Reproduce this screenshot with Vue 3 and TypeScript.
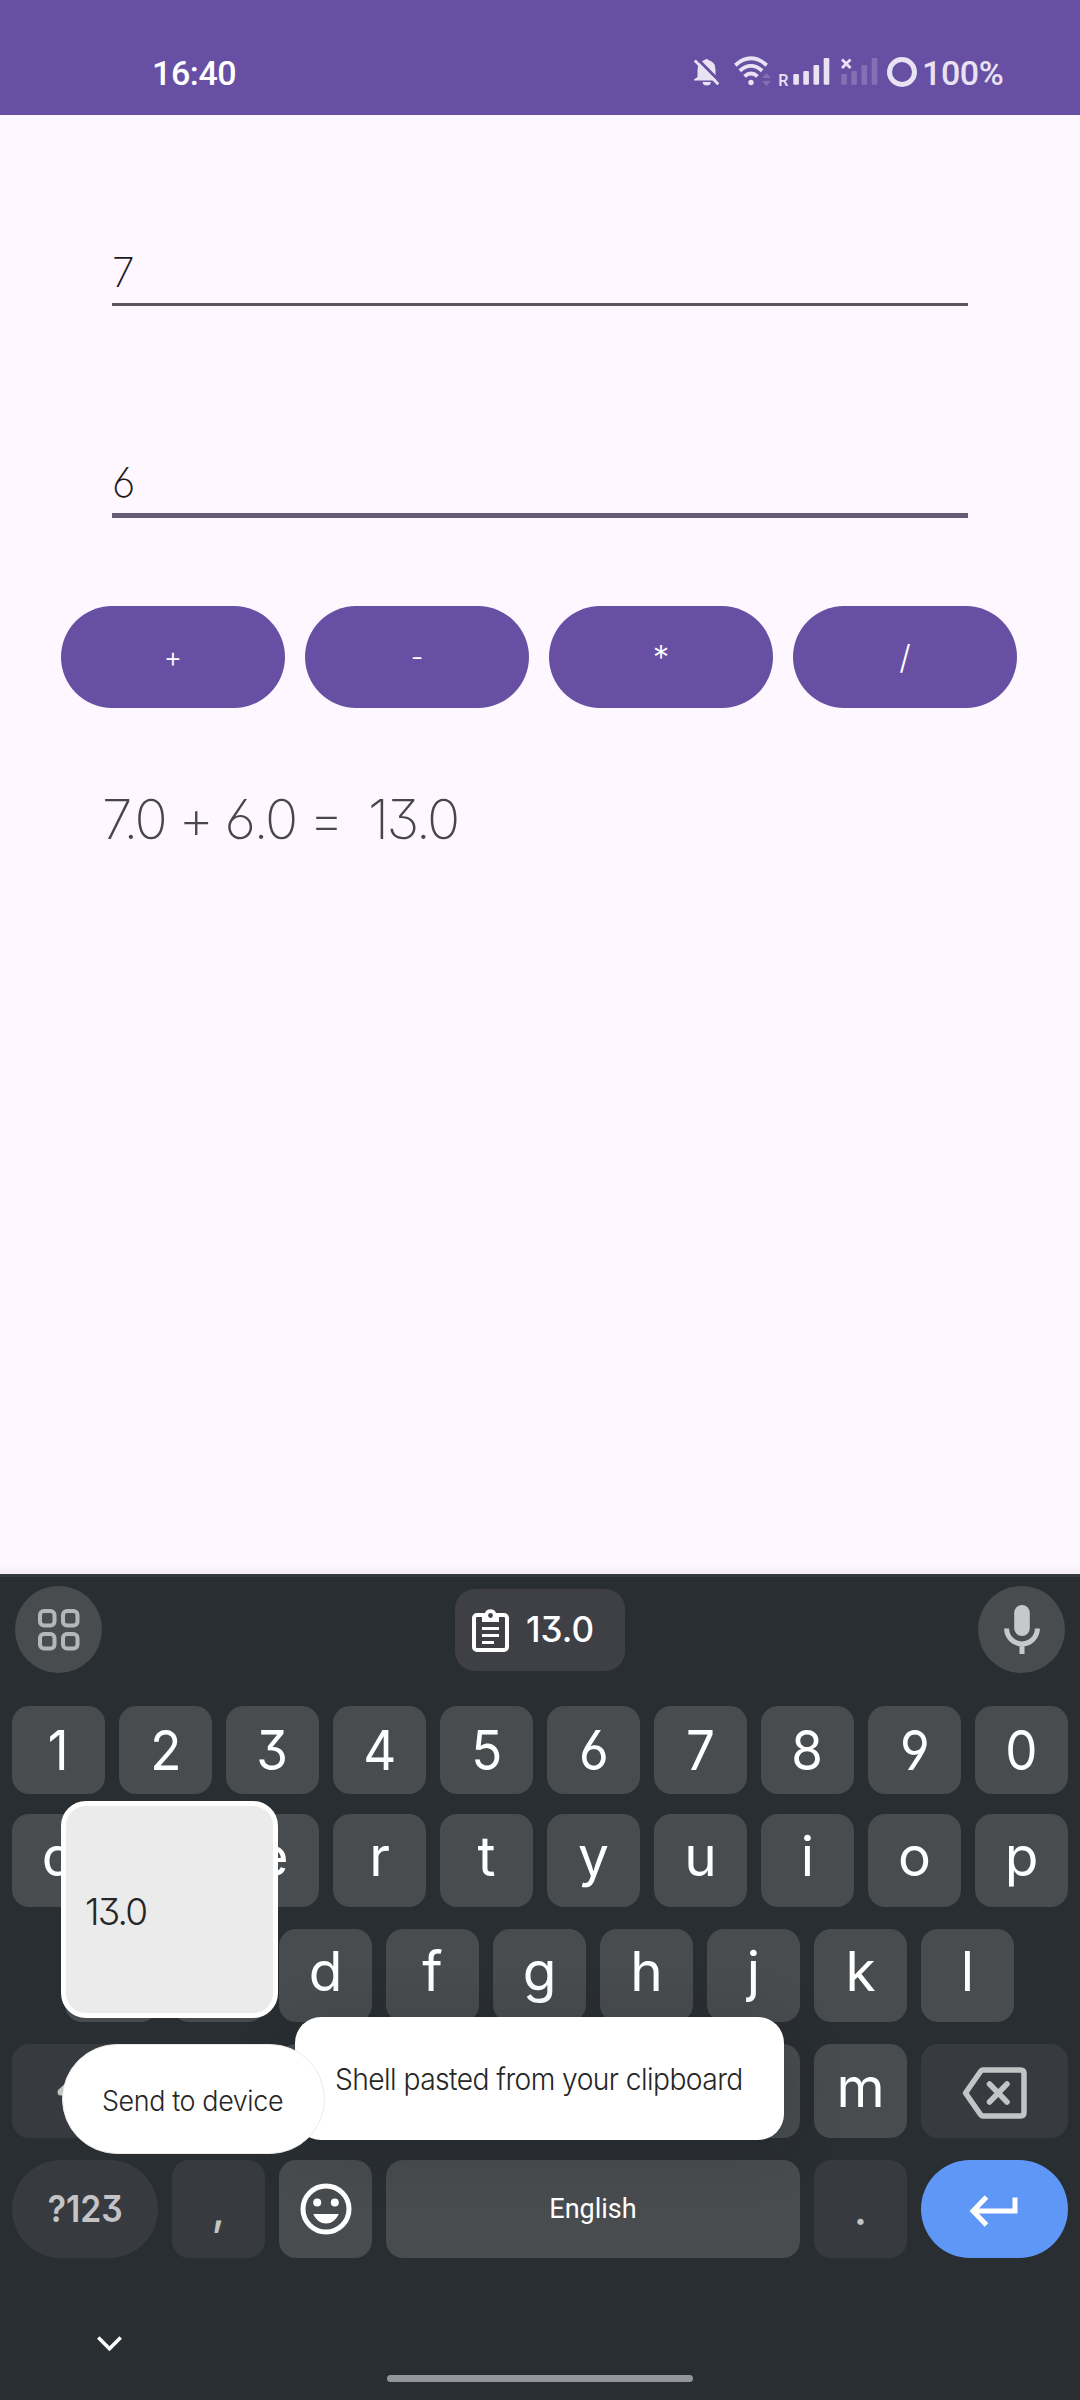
<script setup lang="ts">
import { ref } from 'vue'

const first = ref('7')
const second = ref('6')
const result = ref('7.0 + 6.0 =  13.0')
const operators = ['+', '-', '*', '/']

const digits = '1234567890'.split('')
const rowTop = 'qwertyuiop'.split('')
const rowHome = 'asdfghjkl'.split('')
// Only the last letter is uncovered while the clipboard popups are open
const rowBottom = ['', '', '', '', '', '', 'm']
</script>

<template>
  <div class="screen">
    <header class="status">
      <span class="clock">16:40</span>
      <span class="tray">
        <svg class="tray-icons" width="230" height="36" viewBox="690 54 230 36">
          <g fill="#e8e2f2">
            <path d="M697.500 77V70Q697.500 62 704.500 60Q706.500 58 708.500 60Q715.500 62 715.500 70V76.500L719 79.500V80.500H694V79.500ZM702.500 82H711Q710.500 85.500 706.700 85.500Q703 85.500 702.500 82Z" />
            <path d="M696.800 58.200L720.500 82.200" stroke="#6750a3" stroke-width="3" />
            <path d="M692 62L698 68.500V62Z" fill="#6750a3" />
            <path d="M694.800 60.500L718.300 84.300" stroke="#e8e2f2" stroke-width="2.800" />
            <circle cx="751" cy="82.500" r="2.700" />
            <rect x="793.300" y="74" width="5.600" height="10.700" rx="1.200" />
            <rect x="803.300" y="71" width="5.600" height="13.700" rx="1.200" />
            <rect x="813.500" y="65" width="5.600" height="19.700" rx="1.200" />
            <rect x="823.700" y="58" width="5.600" height="26.700" rx="1.200" />
          </g>
          <g fill="none" stroke="#e8e2f2" stroke-width="3.800">
            <path d="M735.300 65.200Q751 51.500 766.700 65.200" />
            <path d="M739.800 70.700Q751 61 762.200 70.700" />
            <path d="M744.500 76.300Q751 70.500 757.500 76.300" />
            <path d="M842 59.500L850.500 68M850.500 59.500L842 68" stroke-width="2.800" />
            <circle cx="902" cy="72" r="12.500" stroke-width="5" />
          </g>
          <g fill="#8570b6">
            <path d="M762 78L766.500 73L771 78ZM762 81L766.500 86L771 81Z" />
            <rect x="841.300" y="74" width="5.600" height="10.700" rx="1.200" />
            <rect x="851.300" y="71" width="5.600" height="13.700" rx="1.200" />
            <rect x="861.500" y="65" width="5.600" height="19.700" rx="1.200" />
            <rect x="871.700" y="58" width="5.600" height="26.700" rx="1.200" />
          </g>
          <text x="778.300" y="85.500" class="roaming">R</text>
        </svg>
        <span class="battery">100%</span>
      </span>
    </header>

    <main class="app">
      <div class="field"><span>{{ first }}</span></div>
      <div class="field focused"><span>{{ second }}</span></div>
      <div class="ops">
        <button v-for="op in operators" :key="op" :class="{ tall: op === '*' || op === '/' }">{{ op }}</button>
      </div>
      <div class="result">{{ result }}</div>
    </main>

    <section class="keyboard">
      <div class="toolbar">
        <span class="round">
          <svg width="42" height="42" viewBox="0 0 42 42" fill="none" stroke="#b5b6b8" stroke-width="4">
            <rect x="2" y="2" width="14.500" height="14.500" rx="4" />
            <rect x="25" y="2" width="14.500" height="14.500" rx="4" />
            <rect x="2" y="25" width="14.500" height="14.500" rx="4" />
            <rect x="25" y="25" width="14.500" height="14.500" rx="4" />
          </svg>
        </span>
        <span class="chip">
          <svg width="37" height="43" viewBox="0 0 37 43">
            <rect x="2" y="6" width="33" height="35" rx="3" fill="none" stroke="#fff" stroke-width="4" />
            <path d="M10 4.500H12.800A6 6 0 0 1 24.200 4.500H27V13H10Z" fill="#fff" />
            <circle cx="18.500" cy="6.500" r="2.400" fill="#3e4045" />
            <path d="M10 19.500H27M10 26.500H27M10 33.500H22" stroke="#fff" stroke-width="3.200" />
          </svg>
          <span>13.0</span>
        </span>
        <span class="round">
          <svg width="36" height="49" viewBox="0 0 36 49">
            <rect x="10.200" y="0" width="15.600" height="31" rx="7.800" fill="#c7c8ca" />
            <path d="M2.600 23.500A15.400 15.400 0 0 0 33.400 23.500M18 39V49" fill="none" stroke="#c7c8ca" stroke-width="5" />
          </svg>
        </span>
      </div>

      <div class="row numbers">
        <span v-for="k in digits" :key="k" class="key"><b>{{ k }}</b></span>
      </div>
      <div class="row">
        <span v-for="k in rowTop" :key="k" class="key"><i>{{ k }}</i></span>
      </div>
      <div class="row home">
        <span v-for="k in rowHome" :key="k" class="key"><i>{{ k }}</i></span>
      </div>
      <div class="row lower">
        <span class="key dim wide">
          <svg width="62" height="50" viewBox="0 0 62 50" fill="none" stroke="#c3c4c6" stroke-width="7" stroke-linecap="round" stroke-linejoin="round">
            <path d="M7 24L31 2L55 24H43V46H19V24Z" />
          </svg>
        </span>
        <span v-for="(k, n) in rowBottom" :key="n" class="key"><i>{{ k }}</i></span>
        <span class="key dim wide">
          <svg width="66" height="52" viewBox="0 0 66 52" fill="none" stroke="#c3c4c6" stroke-width="5.500" stroke-linejoin="round">
            <path d="M20.500 3H58.500Q62 3 62 6.500V45.500Q62 49 58.500 49H20.500Q19.500 49 18.500 47.500L3.500 26L18.500 4.500Q19.500 3 20.500 3Z" />
            <path d="M27.500 17L45 35M45 17L27.500 35" stroke-linecap="round" />
          </svg>
        </span>
      </div>
      <div class="row last">
        <span class="key dim wide sym"><b>?123</b></span>
        <span class="key dim punct">,</span>
        <span class="key">
          <svg width="52" height="52" viewBox="0 0 52 52">
            <circle cx="26" cy="26" r="23" fill="none" stroke="#fff" stroke-width="5" />
            <circle cx="17.200" cy="19.500" r="4" fill="#fff" />
            <circle cx="34.800" cy="19.500" r="4" fill="#fff" />
            <path d="M13.200 31H38.800Q34.500 40.500 26 40.500Q17.500 40.500 13.200 31Z" fill="#fff" />
          </svg>
        </span>
        <span class="key space">English</span>
        <span class="key dim punct">.</span>
        <span class="key enter">
          <svg width="50" height="32" viewBox="0 0 50 32" fill="none" stroke="#fff" stroke-width="5">
            <path d="M46 2.500V16H4M17.500 2L4 16L17.500 30" />
          </svg>
        </span>
      </div>
      <div class="nav">
        <svg width="25" height="16" viewBox="0 0 25 16" fill="none" stroke="#fff" stroke-width="3.600">
          <path d="M1.300 1.500L12.500 12.700L23.700 1.500" />
        </svg>
        <span class="home-bar"></span>
      </div>
    </section>

    <div class="toast"><span>Shell pasted from your clipboard</span></div>
    <div class="clip-card"><span>13.0</span></div>
    <div class="send"><span>Send to device</span></div>
  </div>
</template>

<style>
body {
  margin: 0;
  background: #fef7ff;
}
</style>

<style scoped>
.screen {
  position: relative;
  width: 1080px;
  height: 2400px;
  overflow: hidden;
  display: flex;
  flex-direction: column;
  background: #fef7ff;
  font-family: Inter, "Noto Sans", sans-serif;
  font-feature-settings: "cv03", "cv04", "cv09";
}
.screen * {
  box-sizing: border-box;
}
svg {
  display: block;
  flex: none;
}
.status {
  height: 115px;
  flex: none;
  background: #6750a3;
  display: flex;
  justify-content: space-between;
  padding: 53px 76px 0 152px;
  font-family: Roboto, sans-serif;
  font-weight: 500;
  font-size: 34px;
  line-height: 40px;
  letter-spacing: -0.4px;
  color: #fff;
}
.tray {
  display: flex;
  color: #e8e2f2;
}
.tray-icons {
  margin-top: 1px;
}
.battery {
  margin-left: 2px;
  width: 82px;
  white-space: nowrap;
}
.roaming {
  font: 500 16px Roboto, sans-serif;
  letter-spacing: 0;
  fill: #e8e2f2;
}
.app {
  height: 1459px;
  flex: none;
  display: flex;
  flex-direction: column;
  background: linear-gradient(#fef7ff 1450px, #f4edf5);
}
.field {
  height: 191px;
  margin: 0 112px;
  border-bottom: 3px solid #5b555f;
  display: flex;
  align-items: flex-end;
  font-size: 41px;
  font-weight: 200;
  line-height: 50px;
  color: #1d1b20;
  padding-bottom: 6px;
}
.field.focused {
  height: 212px;
  border-bottom: 5px solid #665a75;
}
.ops {
  margin: 88px 63px 0 61px;
  display: flex;
  gap: 20px;
}
.ops button {
  width: 224px;
  height: 102px;
  border: 0;
  border-radius: 51px;
  background: #6750a3;
  color: #fff;
  font: 300 28px Inter, sans-serif;
  padding: 0 0 1px;
}
.ops button.tall {
  font-size: 33px;
  padding: 0;
}
.result {
  margin: 78px 0 0 102px;
  font-size: 55px;
  font-weight: 200;
  line-height: 66px;
  letter-spacing: -2.4px;
  white-space: pre;
  color: #49454f;
}
.keyboard {
  height: 826px;
  flex: none;
  background: #292e32;
  border-top: 3px solid #343a3f;
  display: flex;
  flex-direction: column;
}
.toolbar {
  height: 129px;
  padding: 9px 15px 0;
  display: flex;
  justify-content: space-between;
}
.round {
  width: 87px;
  height: 87px;
  border-radius: 50%;
  background: #484c4e;
  display: flex;
  align-items: center;
  justify-content: center;
}
.chip {
  width: 170px;
  height: 82px;
  margin-top: 3px;
  border-radius: 20px;
  background: #3e4045;
  display: flex;
  align-items: center;
  padding-left: 17px;
  gap: 17px;
  color: #fff;
  font-size: 35px;
  font-weight: 500;
}
.chip span {
  padding-bottom: 2px;
}
.row {
  display: flex;
  gap: 14px;
  margin: 0 12px 22px;
}
.key {
  width: 93px;
  height: 93px;
  flex: none;
  border-radius: 17px;
  background: #484c4e;
  display: flex;
  align-items: center;
  justify-content: center;
  color: #fff;
  font-size: 55px;
  line-height: 66px;
}
.key i {
  font-style: normal;
  padding-bottom: 9px;
}
.key b {
  font-weight: inherit;
  transform: scaleX(0.93);
}
.numbers {
  margin-bottom: 20px;
}
.numbers .key {
  height: 88px;
}
.home {
  margin-left: 65px;
}
.lower .key {
  height: 94px;
}
.lower svg {
  margin-top: 4px;
}
.key.wide {
  width: 146px;
}
.row .wide:last-child,
.key.enter {
  width: 147px;
}
.key.dim {
  background: #373b3f;
  color: #c3c4c6;
}
.last {
  margin-bottom: 0;
}
.last .key {
  height: 98px;
}
.key.sym {
  border-radius: 49px;
  font-size: 37px;
  font-weight: 600;
}
.key.sym b {
  transform: scaleX(0.91);
}
.key.space {
  width: 414px;
  font-family: Roboto, sans-serif;
  font-size: 27px;
}
.key.punct {
  font-size: 44px;
  font-weight: 450;
}
.key.enter {
  border-radius: 49px;
  background: #5e97f6;
}
.key.enter svg {
  margin: 3px 2px 0 0;
}
.nav {
  flex: 1;
  display: flex;
  align-items: flex-start;
  padding: 78px 0 0 97px;
}
.home-bar {
  width: 306px;
  height: 7px;
  border-radius: 4px;
  background: #92969a;
  margin: 39px 0 0 265px;
}
.toast,
.clip-card,
.send {
  position: absolute;
  display: flex;
  align-items: center;
  white-space: nowrap;
  color: #262626;
}
.toast {
  left: 295px;
  top: 2017px;
  width: 489px;
  height: 123px;
  border-radius: 26px;
  background: #fff;
  box-shadow: 0 8px 60px rgba(30, 20, 30, 0.18);
  padding: 1px 0 0 40px;
  font-size: 30px;
  font-weight: 300;
  letter-spacing: -0.6px;
}
.toast span {
  transform: scaleX(0.94);
  transform-origin: left;
}
.clip-card {
  left: 61px;
  top: 1801px;
  width: 217px;
  height: 217px;
  border: 5px solid #fff;
  border-radius: 25px;
  background: #ebebeb;
  padding: 3px 0 0 19px;
  font-size: 37px;
  font-weight: 300;
  letter-spacing: -1.8px;
}
.send {
  left: 62px;
  top: 2044px;
  width: 263px;
  height: 110px;
  border: 1.500px solid #e9e9e9;
  border-radius: 55px;
  background: #fff;
  padding: 3px 0 0 39px;
  font-size: 28px;
  font-weight: 300;
  letter-spacing: -0.4px;
}
.send span {
  transform: scaleX(0.96);
  transform-origin: left;
}
</style>
